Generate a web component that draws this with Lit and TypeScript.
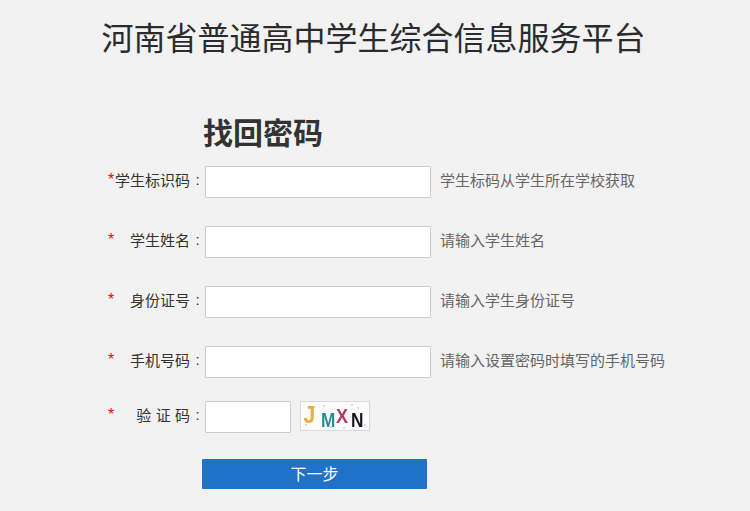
import { LitElement, html, css } from "lit";
import { customElement } from "lit/decorators.js";

const rows = [
  { label: "学生标识码", hint: "学生标码从学生所在学校获取" },
  { label: "学生姓名", hint: "请输入学生姓名" },
  { label: "身份证号", hint: "请输入学生身份证号" },
  { label: "手机号码", hint: "请输入设置密码时填写的手机号码" },
];

@customElement("app-root")
export class AppRoot extends LitElement {
  static styles = css`
    :host {
      display: block;
      width: 750px;
      height: 511px;
      overflow: hidden;
      background: #f2f2f2;
      color: #333;
      font-family: "Noto Sans CJK SC", "Liberation Sans", sans-serif;
      font-size: 15px;
    }
    h1 {
      margin: 0;
      padding: 13px 3px 0 0;
      height: 100px;
      box-sizing: border-box;
      text-align: center;
      font-size: 32px;
      font-weight: 400;
      line-height: 46px;
      color: #2b2b2b;
    }
    h2 {
      margin: 0;
      padding-left: 203px;
      height: 48px;
      padding-top: 9px;
      box-sizing: border-box;
      font-size: 30px;
      line-height: 44px;
      font-weight: 700;
      color: #333;
    }
    .h2-wrap {
      height: 66px;
    }
    .form {
      display: flex;
      flex-direction: column;
      gap: 28px;
    }
    .row {
      display: flex;
      align-items: center;
      height: 32px;
      padding-left: 108px;
    }
    .row.code {
      margin-top: -5px;
    }
    .star {
      color: #f00;
      width: 7px;
      margin-bottom: 4px;
      font-family: "Liberation Sans", sans-serif;
      font-size: 16px;
      line-height: 1;
    }
    label {
      display: flex;
      justify-content: flex-end;
      width: 90px;
      margin-bottom: 4px;
      white-space: nowrap;
      line-height: 20px;
    }
    .colon {
      width: 15px;
      text-align: center;
      font-family: "Liberation Sans", sans-serif;
    }
    .spaced {
      word-spacing: 1px;
    }
    input {
      box-sizing: border-box;
      width: 226px;
      height: 32px;
      margin: 0;
      padding: 0 6px;
      background: #fff;
      border: 1px solid #ccc;
      border-radius: 1px;
      outline: none;
    }
    .short {
      width: 86px;
    }
    .hint {
      margin: 0 0 4px 9px;
      color: #666;
      white-space: nowrap;
      line-height: 20px;
    }
    .captcha {
      display: block;
      margin: -2px 0 0 9px;
      width: 70px;
      height: 30px;
      flex: none;
    }
    .captcha text {
      font-family: "Liberation Sans", sans-serif;
      font-weight: 700;
      font-size: 21px;
    }
    .submit {
      display: block;
      box-sizing: border-box;
      margin: 26px 0 0 202px;
      width: 225px;
      height: 30px;
      padding: 0 0 2px;
      border: none;
      border-radius: 1px;
      background: #1f72c8;
      color: #fff;
      font-family: inherit;
      font-size: 16px;
      font-weight: 400;
      line-height: 28px;
      text-align: center;
    }
  `;

  render() {
    return html`
      <h1>河南省普通高中学生综合信息服务平台</h1>
      <div class="h2-wrap"><h2>找回密码</h2></div>
      <div class="form">
        ${rows.map(
          (r) => html`
            <div class="row">
              <span class="star">*</span>
              <label>${r.label}<span class="colon">:</span></label>
              <input type="text" />
              <span class="hint">${r.hint}</span>
            </div>
          `
        )}
        <div class="row code">
          <span class="star">*</span>
          <label><span class="spaced">验 证 码</span><span class="colon">:</span></label>
          <input class="short" type="text" />
          <svg class="captcha" viewBox="0 0 70 30">
            <defs>
              <filter id="soft"><feGaussianBlur stdDeviation="0.35" /></filter>
            </defs>
            <rect x="0.5" y="0.5" width="69" height="29" fill="#fdfcfd" stroke="#d8d8dc" />
            <g fill="#d9c7d6">
              <circle cx="6" cy="24" r="1" /><circle cx="14" cy="6" r="1" />
              <circle cx="24" cy="5" r="1" /><circle cx="31" cy="26" r="1" />
              <circle cx="52" cy="4" r="1" /><circle cx="58" cy="7" r="1" />
              <circle cx="65" cy="24" r="1" /><circle cx="44" cy="27" r="1" />
            </g>
            <g filter="url(#soft)">
              <text transform="translate(3.5 22) scale(1 1.15)" fill="#e9ae3a">J</text>
              <text transform="translate(21 26) scale(0.82 1)" fill="#2b8f8f">M</text>
              <text transform="translate(36 22) scale(0.86 1)" fill="#b23a66">X</text>
              <text transform="translate(51 26) scale(0.82 1)" fill="#15151c">N</text>
            </g>
          </svg>
        </div>
      </div>
      <button class="submit">下一步</button>
    `;
  }
}
